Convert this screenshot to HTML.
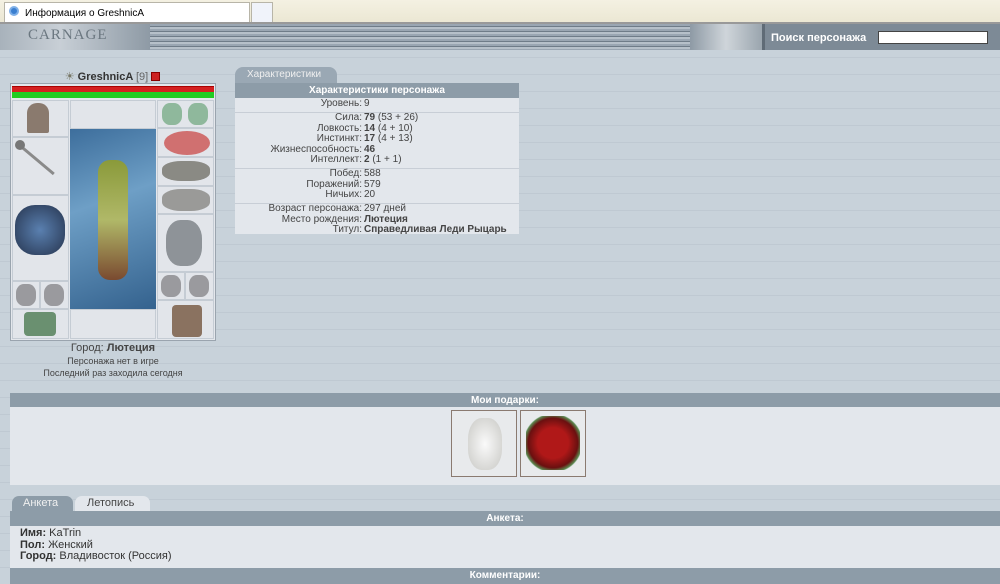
<!DOCTYPE html>
<html><head><meta charset="utf-8"><style>
*{margin:0;padding:0;box-sizing:border-box}
body{width:1000px;height:584px;overflow:hidden;font-family:"Liberation Sans","DejaVu Sans",sans-serif;font-size:10px;color:#333;background:#c8d2da;position:relative}
.abs{position:absolute}
.bg{background:repeating-linear-gradient(0deg,#c8d2da 0 16px,#bfc9d2 16px 17px),#c8d2da}
.hdr{background:#8d9ca8;color:#fff;font-weight:bold;text-align:center;font-size:10px}
.slot{position:absolute;background:#e2e5ea;border:1px solid #c5ccd4}
.st td{font-size:10px;line-height:10.5px;padding:0 1px;color:#444}
.it{position:absolute;border-radius:40%}
</style></head><body>
<div class="abs bg" style="left:0;top:50px;width:1000px;height:534px"></div>
<div class="abs" style="left:0;top:0;width:1000px;height:23px;background:linear-gradient(#f4f1e2,#ebe7d3)"></div>
<div class="abs" style="left:4px;top:2px;width:246px;height:21px;background:#fff;border:1px solid #b8b5a8;border-bottom:none;font-size:10px;padding:5px 0 0 20px;color:#000">Информация о GreshnicA</div>
<div class="abs" style="left:9px;top:6px;width:10px;height:10px;border-radius:50%;background:#3b7fd0;border:2px solid #7fb0e8"></div>
<div class="abs" style="left:251px;top:2px;width:22px;height:21px;background:#f0f3fa;border:1px solid #b8b5a8"></div>
<div class="abs" style="left:0;top:22px;width:1000px;height:2px;background:#999"></div>
<div class="abs" style="left:0;top:24px;width:762px;height:26px;background:repeating-linear-gradient(#9aa6b2 0 2px,#6f7c88 2px 3px,#b6c0c9 3px 5px)"></div>
<div class="abs" style="left:0;top:24px;width:150px;height:26px;background:linear-gradient(90deg,#a8b2bb,#c8cfd6 40%,#8e9aa5)"></div>
<div class="abs" style="left:28px;top:27px;font-family:'Liberation Serif',serif;font-size:15px;color:#6b7780;letter-spacing:1px">CARNAGE</div>
<div class="abs" style="left:690px;top:24px;width:72px;height:26px;background:linear-gradient(90deg,#8e9aa5,#cfd5da,#9aa5ae)"></div>
<div class="abs" style="left:762px;top:24px;width:238px;height:26px;background:#7d8a96;border-left:3px solid #5f6b76"></div>
<div class="abs" style="left:771px;top:32px;color:#fff;font-weight:bold;font-size:11px">Поиск персонажа</div>
<div class="abs" style="left:878px;top:31px;width:110px;height:13px;background:#fff;border:1px solid #444"></div>

<div class="abs" style="left:10px;top:70px;width:205px;text-align:center;font-size:11px;font-weight:bold;color:#333"><span style="color:#776">☀</span> GreshnicA <span style="font-weight:normal;color:#666">[9]</span> <span style="display:inline-block;width:9px;height:9px;background:#c22;border:1px solid #800;vertical-align:-1px"></span></div>
<div class="abs" style="left:10px;top:83px;width:206px;height:258px;background:#e4e7ec;border:1px solid #9aa4ae"></div>
<div class="abs" style="left:12px;top:86px;width:202px;height:6px;background:#d42020;border-top:1px solid #a00"></div>
<div class="abs" style="left:12px;top:92px;width:202px;height:6px;background:#22cc22"></div>
<div class="slot" style="left:12px;top:100px;width:57px;height:37px"></div>
<div class="slot" style="left:12px;top:137px;width:57px;height:58px"></div>
<div class="slot" style="left:12px;top:195px;width:57px;height:86px"></div>
<div class="slot" style="left:12px;top:281px;width:28px;height:28px"></div>
<div class="slot" style="left:40px;top:281px;width:29px;height:28px"></div>
<div class="slot" style="left:12px;top:309px;width:57px;height:30px"></div>
<div class="slot" style="left:70px;top:100px;width:86px;height:29px"></div>
<div class="slot" style="left:70px;top:309px;width:86px;height:30px"></div>
<div class="abs" style="left:70px;top:129px;width:86px;height:180px;background:linear-gradient(160deg,#3d6e9c,#6e9fc6 40%,#34628e)"></div>
<div class="abs" style="left:98px;top:160px;width:30px;height:120px;background:linear-gradient(#8a9a3a,#b0b868 50%,#7a4a30);border-radius:12px"></div>
<div class="slot" style="left:157px;top:100px;width:57px;height:28px"></div>
<div class="slot" style="left:157px;top:128px;width:57px;height:29px"></div>
<div class="slot" style="left:157px;top:157px;width:57px;height:29px"></div>
<div class="slot" style="left:157px;top:186px;width:57px;height:28px"></div>
<div class="slot" style="left:157px;top:214px;width:57px;height:58px"></div>
<div class="slot" style="left:157px;top:272px;width:28px;height:28px"></div>
<div class="slot" style="left:185px;top:272px;width:29px;height:28px"></div>
<div class="slot" style="left:157px;top:300px;width:57px;height:39px"></div>
<div class="abs" style="left:27px;top:103px;width:22px;height:30px;background:#8a7a6e;border-radius:10px 10px 2px 2px"></div>
<div class="abs" style="left:18px;top:142px;width:48px;height:3px;background:#8a8a8a;transform:rotate(40deg);transform-origin:0 0"></div>
<div class="abs" style="left:15px;top:140px;width:10px;height:10px;background:#777;border-radius:50%"></div>
<div class="abs" style="left:15px;top:205px;width:50px;height:50px;background:radial-gradient(#5a80b0,#26344e);border-radius:40%"></div>
<div class="abs" style="left:166px;top:220px;width:36px;height:46px;background:#8e9398;border-radius:40%"></div>
<div class="it" style="left:162px;top:103px;width:20px;height:22px;background:#8fb89c"></div>
<div class="it" style="left:188px;top:103px;width:20px;height:22px;background:#8fb89c"></div>
<div class="abs" style="left:164px;top:131px;width:46px;height:24px;background:#d07070;border-radius:50%"></div>
<div class="it" style="left:162px;top:161px;width:48px;height:20px;background:#8a8a84"></div>
<div class="it" style="left:162px;top:189px;width:48px;height:22px;background:#9a9a98"></div>
<div class="it" style="left:16px;top:284px;width:20px;height:22px;background:#9a9a9e"></div>
<div class="it" style="left:44px;top:284px;width:20px;height:22px;background:#9a9a9e"></div>
<div class="it" style="left:161px;top:275px;width:20px;height:22px;background:#9a9a9e"></div>
<div class="it" style="left:189px;top:275px;width:20px;height:22px;background:#9a9a9e"></div>
<div class="abs" style="left:172px;top:305px;width:30px;height:32px;background:#8a7260;border-radius:4px"></div>
<div class="abs" style="left:24px;top:312px;width:32px;height:24px;background:#6a9070;border-radius:4px"></div>
<div class="abs" style="left:10px;top:342px;width:206px;text-align:center;font-size:11px;color:#444">Город: <b>Лютеция</b></div>
<div class="abs" style="left:10px;top:355px;width:206px;text-align:center;font-size:9px;color:#444;line-height:12px">Персонажа нет в игре<br>Последний раз заходила сегодня</div>

<div class="abs" style="left:235px;top:67px;width:102px;height:16px;background:#9aa8b4;border-radius:8px 8px 0 0;color:#f0f0f0;font-size:10px;padding:2px 0 0 12px">Характеристики</div>
<div class="abs hdr" style="left:235px;top:83px;width:284px;height:15px;padding-top:2px">Характеристики персонажа</div>
<div class="abs" style="left:235px;top:98px;width:284px;height:136px;background:#e3e7ec">
<table class="st" style="border-collapse:collapse;width:100%;margin-top:1px">
<tr><td style="text-align:right;width:128px">Уровень:</td><td>9</td></tr>
<tr><td colspan=2 style="height:3px;border-bottom:1px solid #c8ced6"></td></tr>
<tr><td style="text-align:right">Сила:</td><td><b>79</b> (53 + 26)</td></tr>
<tr><td style="text-align:right">Ловкость:</td><td><b>14</b> (4 + 10)</td></tr>
<tr><td style="text-align:right">Инстинкт:</td><td><b>17</b> (4 + 13)</td></tr>
<tr><td style="text-align:right">Жизнеспособность:</td><td><b>46</b></td></tr>
<tr><td style="text-align:right">Интеллект:</td><td><b>2</b> (1 + 1)</td></tr>
<tr><td colspan=2 style="height:3px;border-bottom:1px solid #c8ced6"></td></tr>
<tr><td style="text-align:right">Побед:</td><td>588</td></tr>
<tr><td style="text-align:right">Поражений:</td><td>579</td></tr>
<tr><td style="text-align:right">Ничьих:</td><td>20</td></tr>
<tr><td colspan=2 style="height:3px;border-bottom:1px solid #c8ced6"></td></tr>
<tr><td style="text-align:right">Возраст персонажа:</td><td>297 дней</td></tr>
<tr><td style="text-align:right">Место рождения:</td><td><b>Лютеция</b></td></tr>
<tr><td style="text-align:right">Титул:</td><td style="white-space:nowrap"><b>Справедливая Леди Рыцарь</b></td></tr>
</table></div>

<div class="abs hdr" style="left:10px;top:393px;width:990px;height:14px;padding-top:2px">Мои подарки:</div>
<div class="abs" style="left:10px;top:407px;width:990px;height:78px;background:#e3e7ec"></div>
<div class="abs" style="left:451px;top:410px;width:66px;height:67px;background:#e8eaec;border:1px solid #8a7a70"></div>
<div class="abs" style="left:468px;top:418px;width:34px;height:52px;background:radial-gradient(#fafafa,#c8c8c4);border-radius:40%"></div>
<div class="abs" style="left:520px;top:410px;width:66px;height:67px;background:#e8eaec;border:1px solid #8a7a70"></div>
<div class="abs" style="left:526px;top:416px;width:54px;height:54px;background:radial-gradient(#b01818 40%,#6a1010 65%,#5a8a50 75%,transparent 78%)"></div>

<div class="abs" style="left:12px;top:496px;width:61px;height:15px;background:#8d9ca8;border-radius:7px 7px 0 0;color:#f0f0f0;font-size:11px;padding:1px 0 0 11px">Анкета</div>
<div class="abs" style="left:75px;top:496px;width:75px;height:15px;background:#e3e7ec;border-radius:7px 7px 0 0;color:#444;font-size:11px;padding:1px 0 0 12px">Летопись</div>
<div class="abs hdr" style="left:10px;top:511px;width:990px;height:15px;padding-top:2px">Анкета:</div>
<div class="abs" style="left:10px;top:526px;width:990px;height:42px;background:#e3e7ec;font-size:11px;line-height:11.5px;padding:2px 0 0 10px;color:#333"><b>Имя:</b> KaTrin<br><b>Пол:</b> Женский<br><b>Город:</b> Владивосток (Россия)</div>
<div class="abs hdr" style="left:10px;top:568px;width:990px;height:16px;padding-top:2px">Комментарии:</div>
</body></html>
